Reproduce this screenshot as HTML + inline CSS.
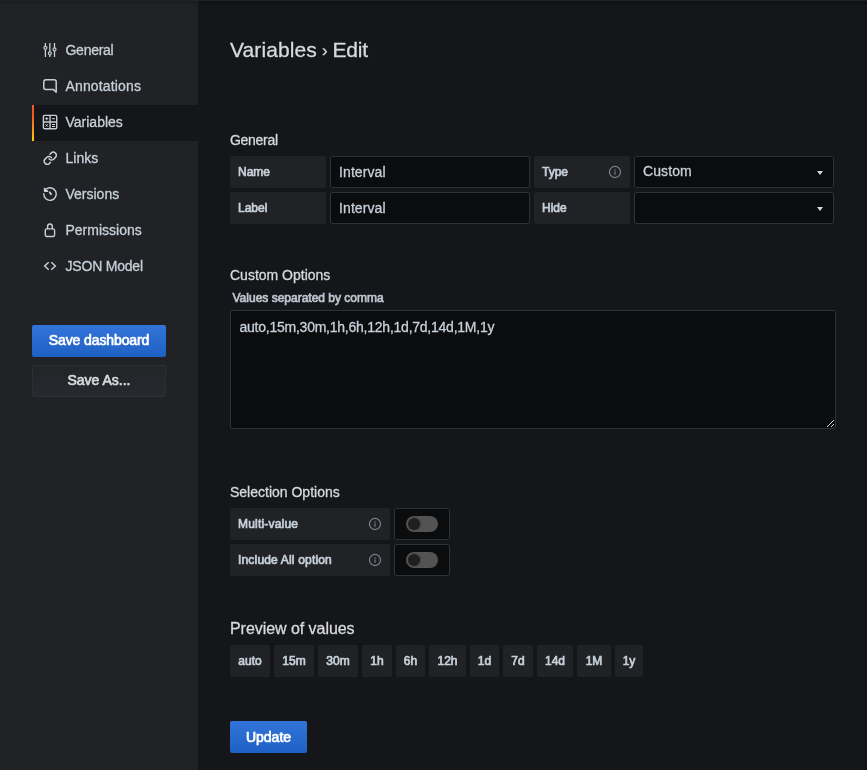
<!DOCTYPE html>
<html lang="en">
<head>
<meta charset="utf-8">
<title>Variables - Edit</title>
<style>
*{box-sizing:border-box;margin:0;padding:0}
html,body{width:867px;height:770px;overflow:hidden;background:#141619;}
body{position:relative;will-change:transform;font-family:"Liberation Sans",Arial,sans-serif;font-size:14px;color:#c7d0d9;-webkit-font-smoothing:antialiased}
.abs{position:absolute}
#aside{left:0;top:0;width:198px;height:770px;background:#202226}
#topline{left:0;top:0;width:867px;height:1px;background:#1f2125}
#topshade{left:0;top:1px;width:867px;height:8px;background:linear-gradient(to bottom,rgba(0,0,0,.2),rgba(0,0,0,.08) 40%,rgba(0,0,0,0))}
.nav{left:32px;width:166px;height:36px;line-height:36px;white-space:nowrap}
.nav span{-webkit-text-stroke:.3px #c7d0d9;position:absolute;left:33px;top:-1px;font-size:14px;color:#c7d0d9}
.nav svg{position:absolute;left:10px;top:9px;width:16px;height:16px;stroke:#c7d0d9;fill:none}
.nav.active{background:#141619}
.nav.active:before{content:"";position:absolute;left:0;top:0;width:2px;height:36px;background:linear-gradient(to bottom,#f05a28 30%,#fbca0a 99%)}
.btn{left:32px;width:134px;height:32px;line-height:30px;text-align:center;font-size:14px;font-weight:400;-webkit-text-stroke:.7px;border-radius:2px;white-space:nowrap}
.btn-primary{background:linear-gradient(to bottom,#3274d9,#1f60c4);color:#fff}
.btn-inverse{background:linear-gradient(to bottom,#222428,#262a2e);color:#d8d9da;border:1px solid #2b3034;line-height:28px}
h3{-webkit-text-stroke:.3px;font-weight:400;font-size:21px;color:#d8d9da;line-height:30px;left:230px;top:35px;white-space:nowrap;letter-spacing:-.2px}
h5{-webkit-text-stroke:.3px;font-weight:400;font-size:14px;color:#d8d9da;line-height:20px;left:230px;white-space:nowrap}
.lbl{height:32px;line-height:32px;background:#202226;border-radius:2px;font-size:12px;font-weight:400;-webkit-text-stroke:.7px;color:#c7d0d9;padding-left:8px;white-space:nowrap}
.inp{-webkit-text-stroke:.3px;height:32px;line-height:30px;background:#0b0c0e;border:1px solid #2c3235;border-radius:2px;font-size:14px;color:#c7d0d9;padding-left:8px;white-space:nowrap}
.caret{width:0;height:0;border-left:3.600px solid transparent;border-right:3.600px solid transparent;border-top:4px solid #d3dae1}
.info{width:14px;height:14px}
.sw{width:32px;height:16px;border-radius:8px;background:#535353}
.sw:before{content:"";position:absolute;left:2px;top:2px;width:12px;height:12px;border-radius:6px;background:#1f1f1f;box-shadow:1px 0 2px rgba(0,0,0,.25)}
.chip{top:645px;height:32px;line-height:32px;background:#202226;border-radius:2px;font-size:12px;font-weight:400;-webkit-text-stroke:.7px;color:#c7d0d9;text-align:center;white-space:nowrap}
</style>
</head>
<body>
<div id="aside" class="abs"></div>
<div id="topshade" class="abs"></div>
<div id="topline" class="abs"></div>

<div class="abs nav" style="top:33px"><svg viewBox="0 0 16 16"><path d="M3.400 1v3.200M3.400 7.400V15M7.850 1v8.700M7.850 12.900V15M12.500 1v4.800M12.500 9V15" stroke-width="1.300"/><circle cx="3.400" cy="5.800" r="1.500" stroke-width="1.200"/><circle cx="7.850" cy="11.300" r="1.500" stroke-width="1.200"/><circle cx="12.500" cy="7.400" r="1.500" stroke-width="1.200"/></svg><span style="left:33.5px;letter-spacing:-.27px">General</span></div>
<div class="abs nav" style="top:69px"><svg viewBox="0 0 16 16"><path d="M3.800 1.800H12.200a2 2 0 0 1 2 2V14.300L11.200 11.400H3.800a2 2 0 0 1-2-2V3.800a2 2 0 0 1 2-2z" stroke-width="1.500" stroke-linejoin="round"/></svg><span style="left:33.5px;letter-spacing:.15px">Annotations</span></div>
<div class="abs nav active" style="top:105px"><svg viewBox="0 0 16 16"><rect x="1.400" y="1.400" width="13.300" height="13.300" rx="1.300" stroke-width="1.400"/><path d="M8.050 1.400V14.700M1.400 8.050H14.700" stroke-width="1.400"/><path d="M3.200 4.700h3M4.700 3.200v3M10 4.700h3M3.600 10.300l2.200 2.200M5.800 10.300l-2.200 2.200M10 10.500h3M10 12.500h3" stroke-width="1"/></svg><span style="left:33.5px">Variables</span></div>
<div class="abs nav" style="top:141px"><svg viewBox="0 0 24 24" style="left:10.750px;top:9.750px;width:14.500px;height:14.500px"><path d="M10 13a5 5 0 0 0 7.540.540l3-3a5 5 0 0 0-7.070-7.070l-1.720 1.710M14 11a5 5 0 0 0-7.540-.540l-3 3a5 5 0 0 0 7.070 7.070l1.710-1.710" stroke-width="2.400" stroke-linecap="round"/></svg><span style="left:33.5px">Links</span></div>
<div class="abs nav" style="top:177px"><svg viewBox="0 0 16 16"><path d="M2.600 1.800V5.300H6.200" stroke-width="1.500" stroke-linejoin="round" fill="#c7d0d9"/><path d="M1.800 7.600A6.250 6.250 0 1 0 4 3.300" stroke-width="1.400" stroke-linecap="round"/><path d="M7.800 6.400L9 8.200" stroke-width="1.900" stroke-linecap="round"/></svg><span style="left:33.5px">Versions</span></div>
<div class="abs nav" style="top:213px"><svg viewBox="0 0 16 16"><rect x="3.300" y="6.900" width="9.300" height="7.600" rx="1.500" stroke-width="1.400"/><path d="M5.600 6.900V4.400a2.350 2.350 0 0 1 4.700 0V6.900" stroke-width="1.400"/></svg><span style="left:33.5px">Permissions</span></div>
<div class="abs nav" style="top:249px"><svg viewBox="0 0 16 16"><path d="M6.700 4.300L2.700 8l4 3.700M9.300 4.300L13.300 8l-4 3.700" stroke-width="1.500"/></svg><span style="left:33.5px;letter-spacing:-.2px">JSON Model</span></div>

<div class="abs btn btn-primary" style="top:325px;letter-spacing:-.1px">Save dashboard</div>
<div class="abs btn btn-inverse" style="top:365px">Save As...</div>

<h3 class="abs"><span style="letter-spacing:.1px">Variables</span><span style="letter-spacing:-.800px"> </span><span style="font-size:17px;position:relative;top:-1px">›</span><span style="letter-spacing:-.700px"> </span>Edit</h3>

<h5 class="abs" style="top:130px;letter-spacing:-.3px">General</h5>
<div class="abs lbl" style="left:230px;top:156px;width:96px">Name</div>
<div class="abs inp" style="left:330px;top:156px;width:200px;letter-spacing:.1px">Interval</div>
<div class="abs lbl" style="left:534px;top:156px;width:96px">Type</div>
<svg class="abs info" style="left:608px;top:165px" viewBox="0 0 14 14"><circle cx="7" cy="7" r="5.550" fill="none" stroke="#7b8087" stroke-width="1.250"/><rect x="6.400" y="4.300" width="1.200" height="1.300" fill="#7b8087"/><rect x="6.400" y="6.500" width="1.200" height="3.200" fill="#7b8087"/></svg>
<div class="abs inp" style="left:634px;top:156px;width:200px;line-height:28px;letter-spacing:.1px">Custom</div>
<div class="abs caret" style="left:816.600px;top:171px"></div>
<div class="abs lbl" style="left:230px;top:192px;width:96px">Label</div>
<div class="abs inp" style="left:330px;top:192px;width:200px;letter-spacing:.1px">Interval</div>
<div class="abs lbl" style="left:534px;top:192px;width:96px">Hide</div>
<div class="abs inp" style="left:634px;top:192px;width:200px"></div>
<div class="abs caret" style="left:816.600px;top:207px"></div>

<h5 class="abs" style="top:265px">Custom Options</h5>
<div class="abs" style="left:232.500px;top:289px;font-size:12px;line-height:18px;color:#bcc5cf;white-space:nowrap;-webkit-text-stroke:.7px">Values separated by comma</div>
<div class="abs inp" style="left:230px;top:310px;width:606px;height:119px;line-height:20px;padding-top:6px;padding-left:8.500px;letter-spacing:-.24px">auto,15m,30m,1h,6h,12h,1d,7d,14d,1M,1y</div>

<svg class="abs" style="left:826px;top:419px;width:9px;height:9px" viewBox="0 0 9 9" shape-rendering="crispEdges" fill="#cfcfcf"><rect x="1" y="7" width="1" height="1"/><rect x="2" y="6" width="1" height="1"/><rect x="3" y="5" width="1" height="1"/><rect x="4" y="4" width="1" height="1"/><rect x="5" y="3" width="1" height="1"/><rect x="6" y="2" width="1" height="1"/><rect x="7" y="1" width="1" height="1"/><rect x="5" y="7" width="1" height="1"/><rect x="6" y="6" width="1" height="1"/><rect x="7" y="5" width="1" height="1"/></svg>
<h5 class="abs" style="top:482px">Selection Options</h5>
<div class="abs lbl" style="left:230px;top:508px;width:160px;letter-spacing:.2px">Multi-value</div>
<svg class="abs info" style="left:368px;top:517px" viewBox="0 0 14 14"><circle cx="7" cy="7" r="5.550" fill="none" stroke="#7b8087" stroke-width="1.250"/><rect x="6.400" y="4.300" width="1.200" height="1.300" fill="#7b8087"/><rect x="6.400" y="6.500" width="1.200" height="3.200" fill="#7b8087"/></svg>
<div class="abs inp" style="left:394px;top:508px;width:56px"></div>
<div class="abs sw" style="left:406px;top:516px"></div>
<div class="abs lbl" style="left:230px;top:544px;width:160px;letter-spacing:.18px">Include All option</div>
<svg class="abs info" style="left:368px;top:553px" viewBox="0 0 14 14"><circle cx="7" cy="7" r="5.550" fill="none" stroke="#7b8087" stroke-width="1.250"/><rect x="6.400" y="4.300" width="1.200" height="1.300" fill="#7b8087"/><rect x="6.400" y="6.500" width="1.200" height="3.200" fill="#7b8087"/></svg>
<div class="abs inp" style="left:394px;top:544px;width:56px"></div>
<div class="abs sw" style="left:406px;top:552px"></div>

<h5 class="abs" style="top:619px;font-size:16px;letter-spacing:-.05px">Preview of values</h5>
<div class="abs chip" style="left:230px;width:40px">auto</div>
<div class="abs chip" style="left:274px;width:40px">15m</div>
<div class="abs chip" style="left:318px;width:40px">30m</div>
<div class="abs chip" style="left:362px;width:30px">1h</div>
<div class="abs chip" style="left:396px;width:29px">6h</div>
<div class="abs chip" style="left:429px;width:37px">12h</div>
<div class="abs chip" style="left:470px;width:29px">1d</div>
<div class="abs chip" style="left:503px;width:30px">7d</div>
<div class="abs chip" style="left:537px;width:36px">14d</div>
<div class="abs chip" style="left:577px;width:34px">1M</div>
<div class="abs chip" style="left:615px;width:28px">1y</div>

<div class="abs btn btn-primary" style="left:230px;top:721px;width:77px;line-height:32px">Update</div>
</body>
</html>
